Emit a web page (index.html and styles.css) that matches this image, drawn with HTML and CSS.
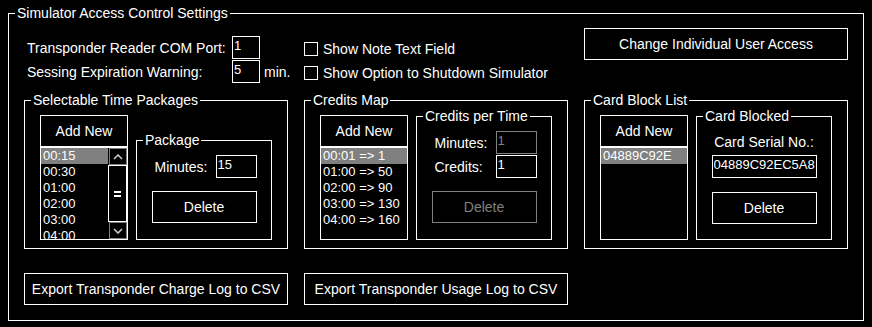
FILE: index.html
```html
<!DOCTYPE html>
<html lang="en">
<head>
    <meta charset="UTF-8">
    <meta name="viewport" content="width=device-width, initial-scale=1.0">
    <title>Simulator Access Control Settings</title>
    <link rel="stylesheet" href="styles.css">
</head>
<body>
    <fieldset class="group outer">
        <legend>Simulator Access Control Settings</legend>
        <div class="outer-body">

            <!-- Top settings -->
            <div class="top-row">
                <div class="port-settings">
                    <label for="com-port">Transponder Reader COM Port:</label>
                    <input type="text" id="com-port" class="field" value="1">
                    <span></span>
                    <label for="expire-warn">Sessing Expiration Warning:</label>
                    <input type="text" id="expire-warn" class="field" value="5">
                    <span class="unit">min.</span>
                </div>
                <div class="options">
                    <div class="check-row"><span class="checkbox"></span>Show Note Text Field</div>
                    <div class="check-row"><span class="checkbox"></span>Show Option to Shutdown Simulator</div>
                </div>
                <button class="btn wide">Change Individual User Access</button>
            </div>

            <!-- Lists -->
            <div class="group-row">
                <fieldset class="group section">
                    <legend>Selectable Time Packages</legend>
                    <div class="section-body">
                        <div class="listbox">
                            <button class="add-new">Add New</button>
                            <div class="list-area">
                                <ul class="items">
                                    <li class="selected">00:15</li>
                                    <li>00:30</li>
                                    <li>01:00</li>
                                    <li>02:00</li>
                                    <li>03:00</li>
                                    <li>04:00</li>
                                </ul>
                                <div class="scrollbar">
                                    <div class="scroll-btn">
                                        <svg width="10" height="6" viewBox="0 0 10 6"><polyline points="1,5 5,1 9,5" fill="none" stroke="#c8c8c8" stroke-width="1.6"/></svg>
                                    </div>
                                    <div class="scroll-thumb">
                                        <svg width="7" height="6" viewBox="0 0 7 6"><rect x="0" y="0" width="7" height="2" fill="#fff"/><rect x="0" y="4" width="7" height="2" fill="#fff"/></svg>
                                    </div>
                                    <div class="scroll-btn">
                                        <svg width="10" height="6" viewBox="0 0 10 6"><polyline points="1,1 5,5 9,1" fill="none" stroke="#c8c8c8" stroke-width="1.6"/></svg>
                                    </div>
                                </div>
                            </div>
                        </div>
                        <fieldset class="group detail package">
                            <legend>Package</legend>
                            <div class="detail-body">
                                <div class="field-row">
                                    <label for="pkg-minutes">Minutes:</label>
                                    <input type="text" id="pkg-minutes" class="field" value="15">
                                </div>
                                <button class="btn delete">Delete</button>
                            </div>
                        </fieldset>
                    </div>
                </fieldset>

                <fieldset class="group section">
                    <legend>Credits Map</legend>
                    <div class="section-body">
                        <div class="listbox">
                            <button class="add-new">Add New</button>
                            <div class="list-area">
                                <ul class="items">
                                    <li class="selected">00:01 =&gt; 1</li>
                                    <li>01:00 =&gt; 50</li>
                                    <li>02:00 =&gt; 90</li>
                                    <li>03:00 =&gt; 130</li>
                                    <li>04:00 =&gt; 160</li>
                                </ul>
                            </div>
                        </div>
                        <fieldset class="group detail">
                            <legend>Credits per Time</legend>
                            <div class="detail-body">
                                <div class="field-row">
                                    <label for="cr-minutes">Minutes:</label>
                                    <input type="text" id="cr-minutes" class="field" value="1" disabled>
                                </div>
                                <div class="field-row">
                                    <label for="cr-credits">Credits:</label>
                                    <input type="text" id="cr-credits" class="field" value="1">
                                </div>
                                <button class="btn delete" disabled>Delete</button>
                            </div>
                        </fieldset>
                    </div>
                </fieldset>

                <fieldset class="group section">
                    <legend>Card Block List</legend>
                    <div class="section-body">
                        <div class="listbox">
                            <button class="add-new">Add New</button>
                            <div class="list-area">
                                <ul class="items">
                                    <li class="selected">04889C92E</li>
                                </ul>
                            </div>
                        </div>
                        <fieldset class="group detail">
                            <legend>Card Blocked</legend>
                            <div class="detail-body">
                                <div class="caption">Card Serial No.:</div>
                                <input type="text" class="field full" value="04889C92EC5A8">
                                <button class="btn delete">Delete</button>
                            </div>
                        </fieldset>
                    </div>
                </fieldset>
            </div>

            <!-- Export -->
            <div class="export-row">
                <button class="btn wide">Export Transponder Charge Log to CSV</button>
                <button class="btn wide">Export Transponder Usage Log to CSV</button>
            </div>
        </div>
    </fieldset>
</body>
</html>
```

FILE: styles.css
```css
body {
    margin: 0;
    padding: 5px 0 0 8px;
    background: #000;
    color: #fff;
    font-family: "Liberation Sans", Arial, sans-serif;
    font-size: 14px;
}

/* Group boxes */
fieldset.group {
    margin: 0;
    padding: 0;
    border: 1px solid #fff;
    min-width: 0;
    box-sizing: border-box;
}

fieldset.group > legend {
    margin-left: 6px;
    padding: 0 2px;
    line-height: 16px;
    white-space: nowrap;
}

.outer {
    width: 856px;
}

.outer-body {
    padding: 7px 15px 15px 15px;
}

/* Shared controls */
.btn {
    background: #000;
    color: #fff;
    border: 1px solid #fff;
    font: inherit;
    height: 32px;
    padding: 0;
    margin: 0;
    white-space: nowrap;
    cursor: pointer;
}

.btn:disabled {
    color: #808080;
    border-color: #808080;
    cursor: default;
}

.wide {
    width: 264px;
}

.field {
    box-sizing: border-box;
    width: 100%;
    height: 23px;
    margin: 0;
    padding: 0 0 4px 1px;
    background: #000;
    color: #fff;
    border: 1px solid #fff;
    font: inherit;
    font-size: 13px;
    outline: none;
}

.field:disabled {
    color: #808080;
    border-color: #808080;
}

/* Top row */
.top-row,
.group-row,
.export-row {
    display: grid;
    grid-template-columns: repeat(3, 264px);
    column-gap: 16px;
    align-items: start;
}

.port-settings {
    display: grid;
    grid-template-columns: 205px 28px auto;
    grid-auto-rows: 23px;
    row-gap: 1px;
    align-items: center;
    padding: 8px 0 0 3px;
    white-space: nowrap;
}

.unit {
    margin-left: 4px;
}

.options {
    padding-top: 9px;
}

.check-row {
    display: flex;
    align-items: center;
    gap: 5px;
    height: 24px;
    white-space: nowrap;
}

.checkbox {
    width: 14px;
    height: 14px;
    box-sizing: border-box;
    border: 1px solid #fff;
}

/* Section groups */
.group-row {
    margin-top: 7px;
}

.section-body {
    display: flex;
    gap: 8px;
    align-items: stretch;
    padding: 0 15px 8px 15px;
}

.listbox {
    width: 88px;
    height: 125px;
    margin-top: 7px;
    box-sizing: border-box;
    border: 1px solid #fff;
    display: flex;
    flex-direction: column;
    flex: none;
}

.add-new {
    height: 32px;
    box-sizing: border-box;
    background: #000;
    color: #fff;
    border: none;
    border-bottom: 2px solid #fff;
    font: inherit;
    padding: 0;
    flex: none;
    cursor: pointer;
}

.list-area {
    flex: 1;
    display: flex;
    min-height: 0;
    overflow: hidden;
}

.items {
    list-style: none;
    margin: 0;
    padding: 0;
    flex: 1;
    overflow: hidden;
    font-size: 13px;
}

.items li {
    height: 16px;
    line-height: 16px;
    padding-left: 2px;
    white-space: nowrap;
}

.items li.selected {
    background: #808080;
}

.scrollbar {
    width: 19px;
    display: flex;
    flex-direction: column;
}

.scroll-btn {
    height: 17px;
    margin-left: 1px;
    box-sizing: border-box;
    border: 1px solid #808080;
    display: flex;
    align-items: center;
    justify-content: center;
}

.scroll-thumb {
    flex: 1;
    border: 1px solid #fff;
    display: flex;
    align-items: center;
    justify-content: center;
}

/* Detail boxes */
fieldset.detail {
    flex: 0 0 136px;
}

fieldset.package {
    margin-top: 24px;
}

.detail-body {
    width: 105px;
    margin: 0 auto;
    padding-top: 7px;
}

.field-row {
    display: flex;
    justify-content: space-between;
    align-items: center;
    height: 23px;
    margin-bottom: 1px;
}

.field-row label {
    padding-left: 3px;
}

.field-row .field {
    width: 41px;
}

.caption {
    height: 23px;
    line-height: 23px;
    text-align: center;
    margin-bottom: 1px;
    white-space: nowrap;
}

.delete {
    display: block;
    width: 105px;
    margin-top: 13px;
}

.field.full + .delete {
    margin-top: 14px;
}

/* Export */
.export-row {
    margin-top: 24px;
}
```
